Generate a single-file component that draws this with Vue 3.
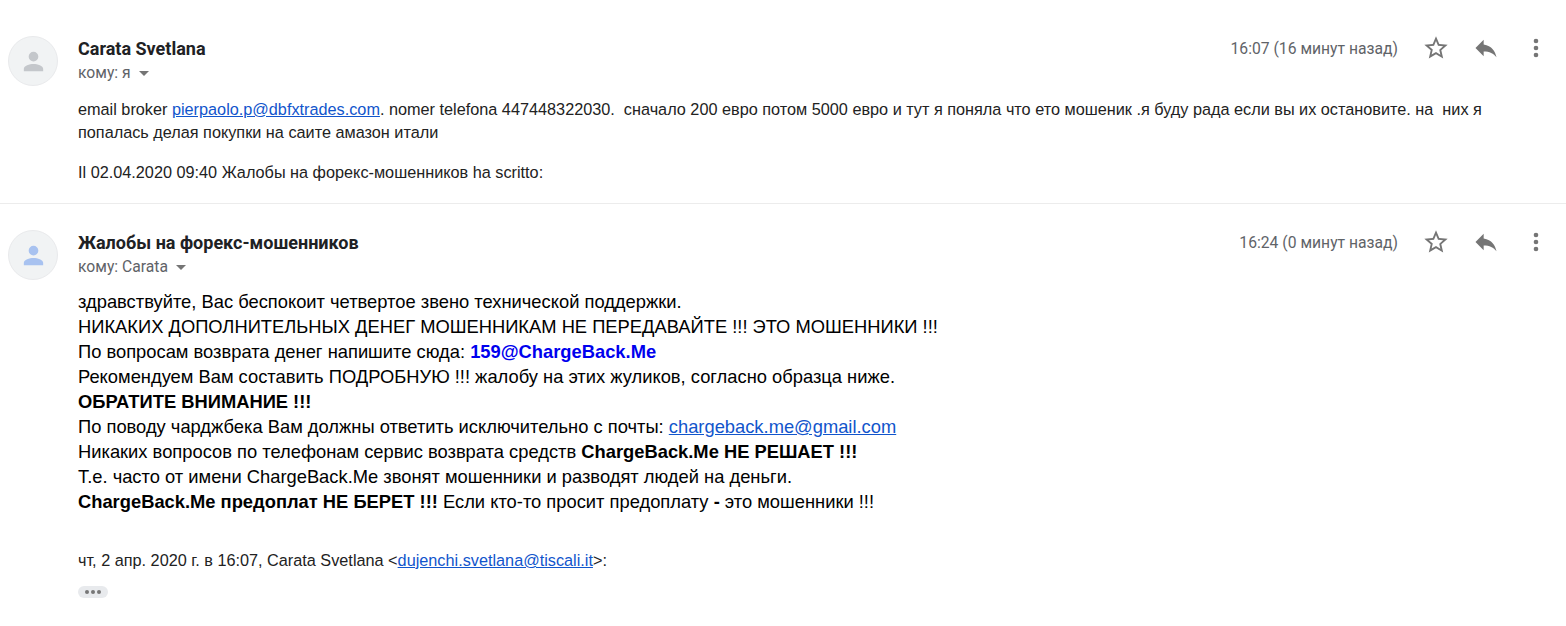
<template>
  <div class="thread">
    <section class="message first">
      <div class="avatar">
        <svg viewBox="0 0 24 24" width="29" height="29"><path fill="#c4c7cb" d="M12 12a4 4 0 1 0 0-8 4 4 0 0 0 0 8zm0 2c-3.300 0-8 1.500-8 4v2h16v-2c0-2.500-4.700-4-8-4z"/></svg>
      </div>
      <div class="main">
        <header class="head">
          <div class="who">
            <div class="name">Carata Svetlana</div>
            <div class="to">кому: я <span class="caret"></span></div>
          </div>
          <div class="meta">
            <span class="time">16:07 (16 минут назад)</span>
            <svg class="ic star" viewBox="0 0 24 24" width="28" height="28"><path fill="#757575" d="M22 9.240l-7.190-.620L12 2 9.190 8.630 2 9.240l5.460 4.730L5.820 21 12 17.270 18.180 21l-1.630-7.030L22 9.240zM12 15.400l-3.760 2.270 1-4.280-3.320-2.880 4.380-.380L12 6.100l1.710 4.040 4.380.380-3.320 2.880 1 4.280L12 15.400z"/></svg>
            <svg class="ic reply" viewBox="0 0 24 24" width="28" height="28"><path fill="#757575" d="M10 9V5l-7 7 7 7v-4.100c5 0 8.500 1.600 11 5.100-1-5-4-10-11-11z"/></svg>
            <svg class="ic more" viewBox="0 0 24 24" width="28" height="28"><path fill="#757575" d="M12 8a2 2 0 1 0 0-4 2 2 0 0 0 0 4zm0 2a2 2 0 1 0 0 4 2 2 0 0 0 0-4zm0 6a2 2 0 1 0 0 4 2 2 0 0 0 0-4z"/></svg>
          </div>
        </header>
        <div class="body small">
          <p>email broker <a>pierpaolo.p@dbfxtrades.com</a>. nomer telefona 447448322030.&nbsp; сначало 200 евро потом 5000 евро и тут я поняла что ето мошеник .я буду рада если вы их остановите. на&nbsp; них я попалась делая покупки на саите амазон итали</p>
          <p class="quote-line">Il 02.04.2020 09:40 Жалобы на форекс-мошенников ha scritto:</p>
        </div>
      </div>
    </section>
    <section class="message second">
      <div class="avatar">
        <svg viewBox="0 0 24 24" width="29" height="29"><path fill="#a8c2f0" d="M12 12a4 4 0 1 0 0-8 4 4 0 0 0 0 8zm0 2c-3.300 0-8 1.500-8 4v2h16v-2c0-2.500-4.700-4-8-4z"/></svg>
      </div>
      <div class="main">
        <header class="head">
          <div class="who">
            <div class="name">Жалобы на форекс-мошенников</div>
            <div class="to">кому: Carata <span class="caret"></span></div>
          </div>
          <div class="meta">
            <span class="time">16:24 (0 минут назад)</span>
            <svg class="ic star" viewBox="0 0 24 24" width="28" height="28"><path fill="#757575" d="M22 9.240l-7.190-.620L12 2 9.190 8.630 2 9.240l5.460 4.730L5.820 21 12 17.270 18.180 21l-1.630-7.030L22 9.240zM12 15.400l-3.760 2.270 1-4.280-3.320-2.880 4.380-.380L12 6.100l1.710 4.040 4.380.380-3.320 2.880 1 4.280L12 15.400z"/></svg>
            <svg class="ic reply" viewBox="0 0 24 24" width="28" height="28"><path fill="#757575" d="M10 9V5l-7 7 7 7v-4.100c5 0 8.500 1.600 11 5.100-1-5-4-10-11-11z"/></svg>
            <svg class="ic more" viewBox="0 0 24 24" width="28" height="28"><path fill="#757575" d="M12 8a2 2 0 1 0 0-4 2 2 0 0 0 0 4zm0 2a2 2 0 1 0 0 4 2 2 0 0 0 0-4zm0 6a2 2 0 1 0 0 4 2 2 0 0 0 0-4z"/></svg>
          </div>
        </header>
        <div class="body large">
          <div>здравствуйте, Вас беспокоит четвертое звено технической поддержки.</div>
          <div>НИКАКИХ ДОПОЛНИТЕЛЬНЫХ ДЕНЕГ МОШЕННИКАМ НЕ ПЕРЕДАВАЙТЕ !!! ЭТО МОШЕННИКИ !!!</div>
          <div>По вопросам возврата денег напишите сюда: <b class="blue">159@ChargeBack.Me</b></div>
          <div>Рекомендуем Вам составить ПОДРОБНУЮ !!! жалобу на этих жуликов, согласно образца ниже.</div>
          <div><b>ОБРАТИТЕ ВНИМАНИЕ !!!</b></div>
          <div>По поводу чарджбека Вам должны ответить исключительно с почты: <a>chargeback.me@gmail.com</a></div>
          <div>Никаких вопросов по телефонам сервис возврата средств <b>ChargeBack.Me НЕ РЕШАЕТ !!!</b></div>
          <div>Т.е. часто от имени ChargeBack.Me звонят мошенники и разводят людей на деньги.</div>
          <div><b>ChargeBack.Me предоплат НЕ БЕРЕТ !!!</b> Если кто-то просит предоплату <b>-</b> это мошенники !!!</div>
        </div>
        <div class="attr">чт, 2 апр. 2020 г. в 16:07, Carata Svetlana &lt;<a>dujenchi.svetlana@tiscali.it</a>&gt;:</div>
        <div class="dots"><i></i><i></i><i></i></div>
      </div>
    </section>
  </div>
</template>

<script setup>
</script>

<style scoped>
.thread {
  width: 1566px;
  height: 626px;
  overflow: hidden;
  background: #fff;
  font-family: "Liberation Sans", Arial, sans-serif;
  color: #222;
}

.message {
  display: flex;
  padding-left: 8px;
}

.first {
  padding-top: 36px;
  height: 167px;
  border-bottom: 1px solid #ececec;
}

.second {
  padding-top: 26px;
}

.avatar {
  flex: none;
  width: 50px;
  height: 50px;
  margin-right: 20px;
  border-radius: 50%;
  background: #f1f3f4;
  border: 1px solid #e9eaec;
  box-sizing: border-box;
  display: flex;
  align-items: center;
  justify-content: center;
}

.main {
  flex: 1;
  min-width: 0;
}

.head {
  display: flex;
  justify-content: space-between;
  align-items: flex-start;
}

.name {
  font-family: Roboto, sans-serif;
  font-weight: 700;
  font-size: 18px;
  line-height: 25px;
  color: #202124;
}

.to {
  font-family: Roboto, sans-serif;
  font-size: 15.700px;
  line-height: 24px;
  color: #5f6368;
}

.caret {
  display: inline-block;
  margin-left: 4px;
  vertical-align: 2px;
  border-left: 5px solid transparent;
  border-right: 5px solid transparent;
  border-top: 5px solid #757575;
}

.meta {
  display: flex;
  align-items: center;
  margin-right: 16px;
  height: 24px;
}

.time {
  font-family: Roboto, sans-serif;
  font-size: 15.700px;
  color: #5f6368;
  margin-right: 24px;
}

.ic {
  flex: none;
  margin-left: 22px;
}

.star {
  margin-left: 0;
}

.body a, .attr a {
  color: #1155cc;
  text-decoration: underline;
}

.small {
  margin-top: 13px;
  font-size: 16.250px;
  line-height: 23px;
  width: 1420px;
}

.small p {
  margin: 0;
}

.small .quote-line {
  margin-top: 17px;
}

.large {
  margin-top: 10px;
  font-size: 18.340px;
  line-height: 25px;
  color: #000;
}

.blue {
  color: #0000ee;
}

.attr {
  margin-top: 35px;
  font-size: 16.250px;
  line-height: 23px;
}

.dots {
  display: inline-flex;
  gap: 2px;
  align-items: center;
  justify-content: center;
  margin-top: 14px;
  width: 30px;
  height: 12px;
  border-radius: 6px;
  background: #e8eaed;
}

.dots i {
  width: 4px;
  height: 4px;
  border-radius: 50%;
  background: #777;
}
</style>
